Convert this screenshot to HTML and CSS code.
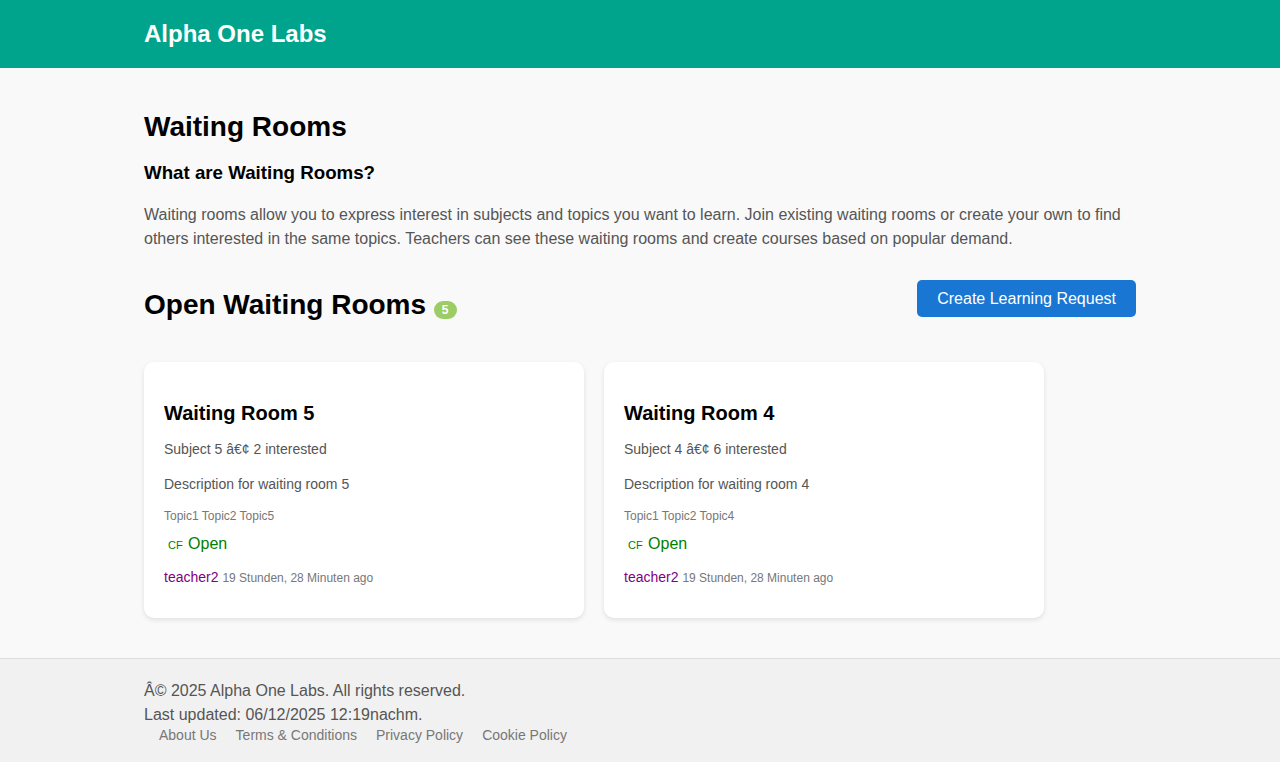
FILE: index.html
```html
<!DOCTYPE html>
<html lang="en">
<head>
<meta charset="utf-8">
<title>Waiting Rooms - Alpha One Labs</title>
<link rel="stylesheet" href="styles.css">
</head>
<body>
<header class="site-header">
  <div class="container site-title">Alpha One Labs</div>
</header>
<main class="container main">
  <h1 class="heading">Waiting Rooms</h1>
  <h3 class="subheading">What are Waiting Rooms?</h3>
  <p class="intro">Waiting rooms allow you to express interest in subjects and topics you want to learn. Join existing waiting rooms or create your own to find others interested in the same topics. Teachers can see these waiting rooms and create courses based on popular demand.</p>
  <div class="toolbar">
    <h1 class="heading">Open Waiting Rooms <span class="badge">5</span></h1>
    <button class="create" type="button">Create Learning Request</button>
  </div>
  <div class="cards">
    <article class="card">
      <h3 class="card-title">Waiting Room 5</h3>
      <p class="card-text">Subject 5 â€¢ 2 interested</p>
      <p class="card-text">Description for waiting room 5</p>
      <div class="topics">Topic1 Topic2 Topic5</div>
      <div class="status"><span class="status-tag">CF</span> Open</div>
      <p class="meta"><a class="teacher" href="#teacher2">teacher2</a> <span class="ago">19 Stunden, 28 Minuten ago</span></p>
    </article>
    <article class="card">
      <h3 class="card-title">Waiting Room 4</h3>
      <p class="card-text">Subject 4 â€¢ 6 interested</p>
      <p class="card-text">Description for waiting room 4</p>
      <div class="topics">Topic1 Topic2 Topic4</div>
      <div class="status"><span class="status-tag">CF</span> Open</div>
      <p class="meta"><a class="teacher" href="#teacher2">teacher2</a> <span class="ago">19 Stunden, 28 Minuten ago</span></p>
    </article>
  </div>
</main>
<footer class="site-footer">
  <div class="container">
    <div>Â© 2025 Alpha One Labs. All rights reserved.</div>
    <div>Last updated: 06/12/2025 12:19nachm.</div>
    <nav class="footer-links">
      <a href="#about">About Us</a>
      <a href="#terms">Terms &amp; Conditions</a>
      <a href="#privacy">Privacy Policy</a>
      <a href="#cookies">Cookie Policy</a>
    </nav>
  </div>
</footer>
</body>
</html>
```

FILE: styles.css
```css
* { box-sizing: border-box; }
body {
  margin: 0;
  font-family: "Liberation Sans", Arial, sans-serif;
  font-size: 16px;
  line-height: 24px;
  color: #000;
  background: #f9f9f9;
}
a { text-decoration: none; }
.container { width: 100%; max-width: 1032px; margin: 0 auto; padding: 0 20px; }
.site-header { background: #00a38b; padding: 16px 0; }
.site-title { font-size: 24px; line-height: 36px; font-weight: bold; color: #fff; }
.main { padding-top: 40px; padding-bottom: 40px; }
.heading { margin: 0; font-size: 28px; line-height: 38px; }
.subheading { margin: 13px 0 16px; line-height: 28px; }
.intro { margin: 0; color: #555; }
.toolbar {
  display: flex;
  justify-content: space-between;
  align-items: flex-start;
  margin: 29px 0 36px;
}
.toolbar .heading { line-height: 42px; padding-top: 4px; }
.badge {
  display: inline-block;
  padding: 0 8px;
  border-radius: 12px;
  background: #9ccc65;
  color: #fff;
  font-size: 12px;
  line-height: 18px;
}
.create {
  border: 0;
  border-radius: 5px;
  padding: 0 20px;
  background: #1976d2;
  color: #fff;
  font: inherit;
  line-height: 37px;
}
.cards { display: flex; flex-wrap: wrap; gap: 20px; }
.card {
  flex: 0 1 440px;
  padding: 36px 20px 28px;
  border-radius: 10px;
  background: #fff;
  box-shadow: 0 2px 5px rgba(0, 0, 0, 0.1);
}
.card-title { margin: 0 0 11px; font-size: 20px; line-height: 30px; }
.card-text { margin: 0 0 14px; font-size: 14px; line-height: 21px; color: #555; }
.topics { margin: -2px 0 7px; font-size: 12px; line-height: 18px; color: #777; }
.status { color: green; }
.status-tag { margin: 0 1px 0 4px; font-size: 11px; }
.meta { margin: 8px 0 0; font-size: 14px; line-height: 24px; }
.teacher { color: purple; }
.ago { font-size: 12px; color: #777; }
.site-footer { padding: 20px 0 19px; border-top: 1px solid #ddd; background: #f1f1f1; color: #555; }
.footer-links { display: flex; gap: 19px; padding-left: 15px; font-size: 14px; line-height: 16px; }
.footer-links a { color: #777; }
```
